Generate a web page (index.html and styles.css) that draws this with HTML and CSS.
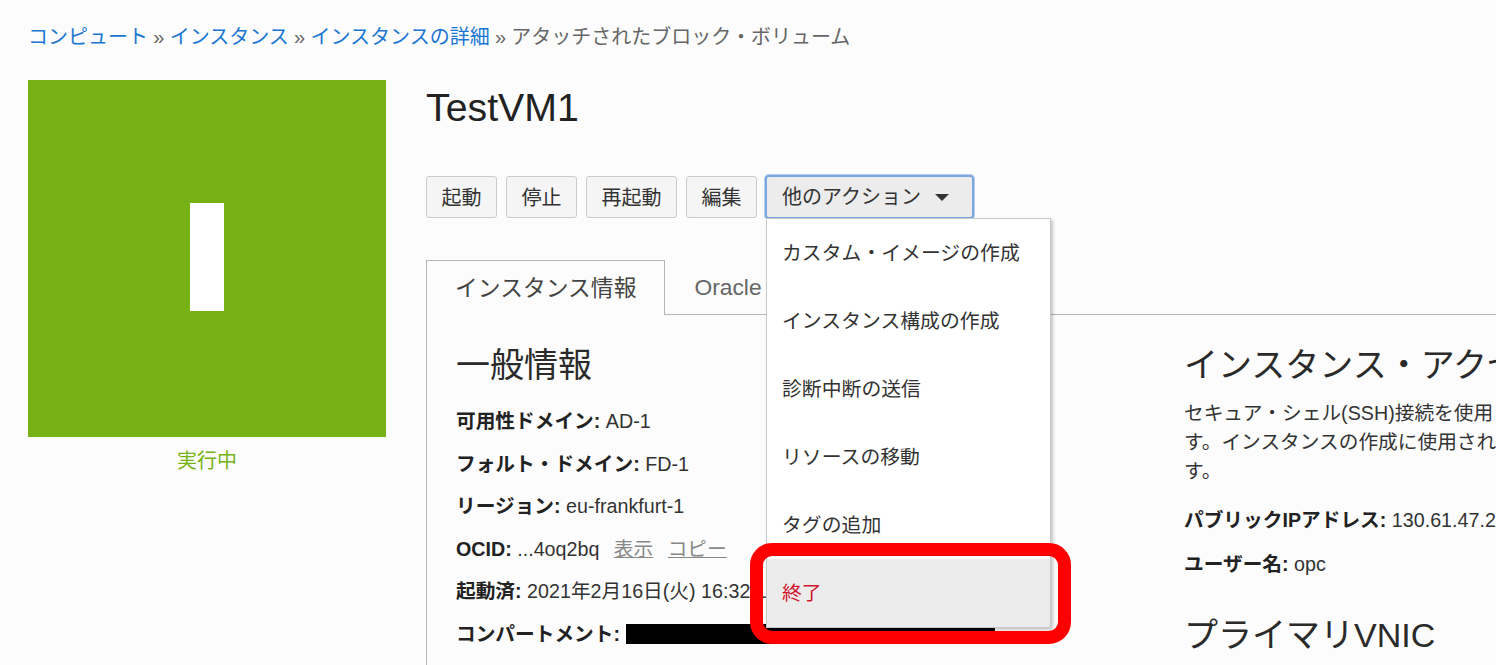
FILE: index.html
```html
<!DOCTYPE html>
<html lang="ja">
<head>
<meta charset="utf-8">
<title>TestVM1</title>
<link rel="stylesheet" href="styles.css">
</head>
<body>
<div class="page">
  <nav class="crumbs"><a href="#">コンピュート</a> » <a href="#">インスタンス</a> » <a href="#">インスタンスの詳細</a> » アタッチされたブロック・ボリューム</nav>
  <div class="layout">
    <aside class="side">
      <div class="tile"><div class="tile-i"></div></div>
      <div class="state">実行中</div>
    </aside>
    <main class="main">
      <h1 class="title">TestVM1</h1>
      <div class="actions">
        <button class="btn">起動</button>
        <button class="btn">停止</button>
        <button class="btn">再起動</button>
        <button class="btn">編集</button>
        <div class="more">
          <button class="btn btn-more">他のアクション<span class="caret"></span></button>
          <ul class="menu">
            <li class="menu-item">カスタム・イメージの作成</li>
            <li class="menu-item">インスタンス構成の作成</li>
            <li class="menu-item">診断中断の送信</li>
            <li class="menu-item">リソースの移動</li>
            <li class="menu-item">タグの追加</li>
            <li class="menu-item menu-danger">終了</li>
          </ul>
        </div>
      </div>
      <div class="tabs">
        <div class="tab tab-active">インスタンス情報</div>
        <div class="tab">Oracle</div>
      </div>
      <div class="panel">
        <section class="col-left">
          <h2 class="heading">一般情報</h2>
          <p class="field"><b>可用性ドメイン:</b> AD-1</p>
          <p class="field"><b>フォルト・ドメイン:</b> FD-1</p>
          <p class="field"><b>リージョン:</b> eu-frankfurt-1</p>
          <p class="field"><b>OCID:</b> ...4oq2bq <a class="mini" href="#">表示</a> <a class="mini" href="#">コピー</a></p>
          <p class="field"><b>起動済:</b> 2021年2月16日(火) 16:32:11 UTC</p>
          <p class="field"><b>コンパートメント:</b> <span class="redact"></span></p>
        </section>
        <section class="col-right">
          <h2 class="heading">インスタンス・アクセス</h2>
          <p class="intro">セキュア・シェル(SSH)接続を使用してインスタンスに接続しま<br>す。インスタンスの作成に使用された秘密キーが必要になりま<br>す。</p>
          <p class="field"><b>パブリックIPアドレス:</b> 130.61.47.215</p>
          <p class="field"><b>ユーザー名:</b> opc</p>
          <h2 class="heading heading-vnic">プライマリVNIC</h2>
        </section>
      </div>
    </main>
  </div>
  <div class="callout"></div>
</div>
</body>
</html>
```

FILE: styles.css
```css
* { box-sizing: border-box; }
html, body { margin: 0; height: 665px; overflow: hidden; }
body {
  background: #fcfcfc;
  color: #333;
  font-family: "Liberation Sans", "Noto Sans CJK JP", sans-serif;
  font-size: 19.7px;
}
.page { position: relative; width: 1496px; height: 665px; overflow: hidden; padding: 23px 0 0 28px; }
.crumbs { font-size: 20px; line-height: 28px; color: #666; white-space: nowrap; word-spacing: -0.3px; }
.crumbs a { color: #1a76d2; text-decoration: none; }
.layout { display: flex; gap: 40px; margin-top: 29px; }
.side { flex: 0 0 358px; }
.tile { height: 357px; background: #76b216; display: flex; align-items: center; justify-content: center; }
.tile-i { width: 34px; height: 108px; background: #fff; margin-top: -4px; }
.state { color: #76b216; font-size: 20px; line-height: 28px; text-align: center; margin-top: 10px; }
.main { flex: 0 0 1100px; }
.title { margin: 0; font-size: 39.3px; font-weight: 400; line-height: 54px; color: #222; }
.actions { display: flex; gap: 9px; margin-top: 42px; align-items: flex-start; }
.btn {
  height: 42px; padding: 0 14.5px 2px; font: inherit; font-size: 20px; color: #333;
  background: #f5f5f5; border: 1px solid #c8ccd0; border-radius: 3px; white-space: nowrap;
}
.more { position: relative; margin-left: -1px; }
.btn-more {
  height: 44px; margin-top: -1px; width: 209px; padding: 0 15px 3px; text-align: left;
  background: #ececec; border: 2px solid #7aa7e0; border-radius: 4px;
  box-shadow: 0 0 0 1px rgba(122,167,224,.55);
  display: flex; align-items: center;
}
.caret {
  width: 0; height: 0; margin-left: 14px; margin-top: 3px;
  border-left: 7px solid transparent; border-right: 7px solid transparent; border-top: 7px solid #333;
}
.menu {
  position: absolute; z-index: 5; left: 1px; top: 42px; width: 285px; margin: 0; padding: 0;
  list-style: none; background: #fff; border: 1px solid #c6c9cc;
  box-shadow: 2px 2px 3px rgba(0,0,0,.22);
}
.menu-item { height: 68px; padding: 0 15px 4px; display: flex; align-items: center; font-size: 19.85px; color: #333; white-space: nowrap; }
.menu-danger { color: #d0122c; background: #ececec; }
.tabs { display: flex; margin-top: 41px; height: 55px; border-bottom: 1px solid #b5b5b5; width: 1070px; }
.tab { padding: 0 30px 0 29px; line-height: 55px; font-size: 22.8px; color: #666; height: 55px; }
.tab-active { color: #444; background: #fcfcfc; border: 1px solid #b5b5b5; border-bottom: 0; padding: 0 28px; }
.panel { display: grid; grid-template-columns: 728px 1fr; padding: 25px 0 0 29px; border-left: 1px solid #b5b5b5; height: 400px; }
.col-left, .col-right { white-space: nowrap; }
.heading { margin: 0; font-size: 34px; font-weight: 400; line-height: 50px; color: #2a2a2a; }
.field { margin: 0; line-height: 28px; height: 42.6px; padding-top: 2px; }
.col-left .heading { margin-bottom: 15px; }
.field b { color: #222; }
.mini { color: #888; text-decoration: underline; margin-left: 9px; }
.redact { display: inline-block; width: 369px; height: 20px; background: #000; vertical-align: -3px; }
.intro { margin: 9px 0 19px; line-height: 28.8px; }
.col-right .field { height: 44px; }
.heading-vnic { margin-top: 18px; }
.callout {
  position: absolute; z-index: 10; left: 750px; top: 543px; width: 321px; height: 101px;
  border: 13px solid #f00; border-radius: 22px;
}
```
